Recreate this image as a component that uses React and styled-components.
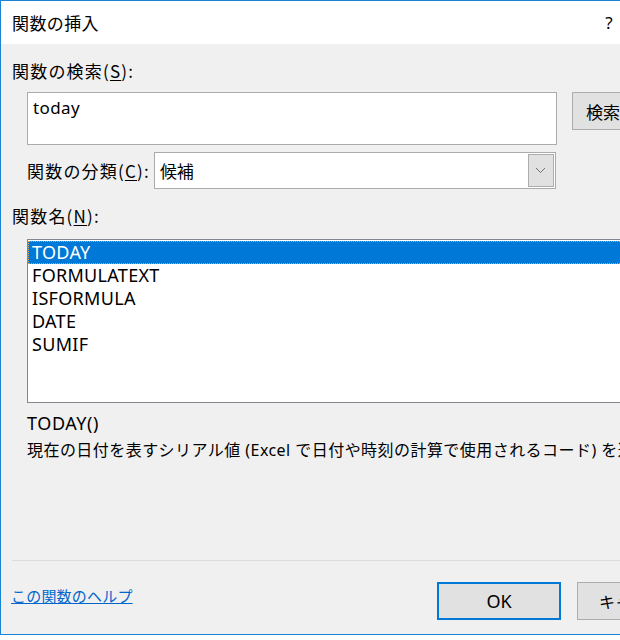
import React from 'react'
import styled, { createGlobalStyle } from 'styled-components'

const GlobalStyle = createGlobalStyle`
  body {
    margin: 0;
    background: #ffffff;
    overflow: hidden;
  }
`

const Window = styled.div`
  width: 700px;
  height: 633px;
  border: 1px solid #1883d7;
  border-right: none;
  background: #f0f0f0;
  display: flex;
  flex-direction: column;
  font-family: "Noto Sans", "Noto Sans CJK JP", sans-serif;
  color: #000;
  overflow: hidden;
`
const TitleBar = styled.div`
  height: 43px;
  background: #ffffff;
  display: flex;
  align-items: center;
  padding-left: 11px;
`
const TitleText = styled.div`
  flex: 1;
  font-family: "Noto Sans CJK JP", sans-serif;
  font-size: 17px;
  letter-spacing: 0.4px;
`
const TitleButton = styled.div`
  width: ${p => p.w}px;
  text-align: center;
  font-size: 17px;
`
const Body = styled.div`
  flex: 1;
  display: flex;
  flex-direction: column;
  padding: 16px 0 0 11px;
`
const Label = styled.div`
  font-family: "Noto Sans CJK JP", sans-serif;
  font-size: 17px;
  letter-spacing: 1.2px;
  line-height: 22px;
  height: 22px;
  white-space: nowrap;
  margin-top: ${p => p.top || 0}px;
`
const Key = styled.span`
  text-decoration: underline;
  text-underline-offset: 2px;
`
const SearchRow = styled.div`
  display: flex;
  align-items: flex-start;
  gap: 15px;
  margin: 10px 0 0 15px;
`
const SearchInput = styled.div`
  width: 530px;
  height: 53px;
  box-sizing: border-box;
  background: #fff;
  border: 1px solid #ababab;
  padding: 4px 5px;
  font-size: 17px;
  letter-spacing: 0.4px;
  line-height: 22px;
  flex-shrink: 0;
`
const Button = styled.div`
  width: ${p => p.w}px;
  height: 38px;
  box-sizing: border-box;
  background: #e1e1e1;
  border: ${p => (p.primary ? '2px solid #0078d7' : '1px solid #adadad')};
  display: flex;
  align-items: center;
  justify-content: ${p => (p.left ? 'flex-start' : 'center')};
  padding-left: ${p => (p.left ? 13 : 0)}px;
  font-family: "Noto Sans", "Noto Sans CJK JP", sans-serif;
  font-size: ${p => p.size || 18}px;
  white-space: nowrap;
  flex-shrink: 0;
`
const CategoryRow = styled.div`
  display: flex;
  align-items: center;
  margin: 7px 0 0 15px;
`
const Select = styled.div`
  margin-left: 4px;
  width: 402px;
  height: 37px;
  box-sizing: border-box;
  background: #fff;
  border: 1px solid #ababab;
  display: flex;
  align-items: center;
  padding: 1px 1px 1px 5px;
  font-family: "Noto Sans CJK JP", sans-serif;
  font-size: 17px;
  flex-shrink: 0;
`
const SelectValue = styled.div`
  flex: 1;
`
const DropButton = styled.div`
  width: 26px;
  height: 33px;
  box-sizing: border-box;
  background: #e1e1e1;
  border: 1px solid #adadad;
  display: flex;
  align-items: center;
  justify-content: center;
`
const ListBox = styled.div`
  margin: 12px 0 0 15px;
  width: 640px;
  height: 164px;
  box-sizing: border-box;
  background: #fff;
  border: 1px solid #828790;
  padding-top: 1px;
`
const ListItem = styled.div`
  height: 23px;
  box-sizing: border-box;
  padding-left: 3px;
  font-size: 18px;
  letter-spacing: 0.3px;
  line-height: 21px;
  background: ${p => (p.selected ? '#0078d7' : 'transparent')};
  color: ${p => (p.selected ? '#fff' : '#000')};
  border: 1px ${p => (p.selected ? 'dotted #f2a03c' : 'solid transparent')};
`
const Syntax = styled.div`
  margin: 8px 0 0 15px;
  font-size: 18px;
  letter-spacing: 0.6px;
  line-height: 24px;
`
const Description = styled.div`
  margin: 4px 0 0 15px;
  font-size: 16px;
  letter-spacing: 0.45px;
  line-height: 22px;
  white-space: nowrap;
`
const Separator = styled.div`
  margin-top: auto;
  height: 1px;
  background: #dcdcdc;
`
const Footer = styled.div`
  display: flex;
  align-items: flex-start;
  height: 73px;
  padding-top: 21px;
  box-sizing: border-box;
`
const HelpLink = styled.a`
  color: #0066cc;
  font-family: "Noto Sans CJK JP", sans-serif;
  font-size: 15px;
  letter-spacing: 0.2px;
  line-height: 22px;
  text-decoration: underline;
  margin: 3px 0 0 -1px;
  width: 427px;
  white-space: nowrap;
`
const Buttons = styled.div`
  display: flex;
  gap: 16px;
`

const functions = ['TODAY', 'FORMULATEXT', 'ISFORMULA', 'DATE', 'SUMIF']

const Chevron = () => (
  <svg width="11" height="7" viewBox="0 0 11 7">
    <path d="M1 1 L5.5 5.5 L10 1" fill="none" stroke="#707070" strokeWidth="1" />
  </svg>
)

export default function App() {
  return (
    <>
      <GlobalStyle />
      <Window>
        <TitleBar>
          <TitleText>関数の挿入</TitleText>
          <TitleButton w={30}>?</TitleButton>
          <TitleButton w={77}>✕</TitleButton>
        </TitleBar>
        <Body>
          <Label>関数の検索(<Key>S</Key>):</Label>
          <SearchRow>
            <SearchInput>today</SearchInput>
            <Button w={120} left size={17}>検索開始(<Key>G</Key>)</Button>
          </SearchRow>
          <CategoryRow>
            <Label>関数の分類(<Key>C</Key>):</Label>
            <Select>
              <SelectValue>候補</SelectValue>
              <DropButton><Chevron /></DropButton>
            </Select>
          </CategoryRow>
          <Label top={16}>関数名(<Key>N</Key>):</Label>
          <ListBox>
            {functions.map((f, i) => (
              <ListItem key={f} selected={i === 0}>{f}</ListItem>
            ))}
          </ListBox>
          <Syntax>TODAY()</Syntax>
          <Description>
            現在の日付を表すシリアル値 (Excel で日付や時刻の計算で使用されるコード) を返します。
          </Description>
          <Separator />
          <Footer>
            <HelpLink>この関数のヘルプ</HelpLink>
            <Buttons>
              <Button w={124} primary>OK</Button>
              <Button w={124} size={16}>キャンセル</Button>
            </Buttons>
          </Footer>
        </Body>
      </Window>
    </>
  )
}
